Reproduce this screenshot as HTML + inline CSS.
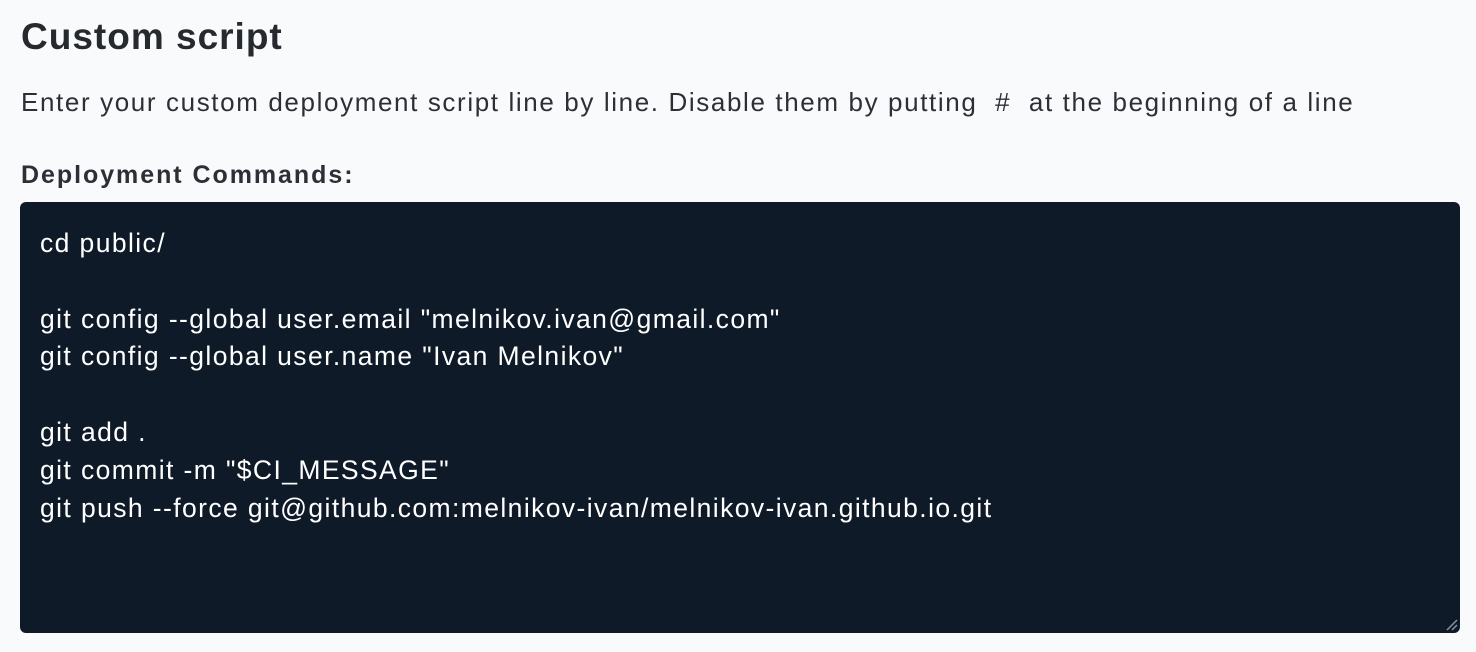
<!DOCTYPE html>
<html><head><meta charset="utf-8"><style>
html,body{margin:0;padding:0;background:#f9fafb;width:1476px;height:652px;overflow:hidden;font-family:"Liberation Sans",sans-serif;color:#26292e}
h1{position:absolute;left:21px;top:16px;margin:0;font-size:37px;font-weight:bold;color:#26292e;letter-spacing:1px}
.sub{position:absolute;left:21px;top:87px;font-size:26px;color:#2c3036;white-space:nowrap;letter-spacing:1.62px}
.lbl{position:absolute;left:21px;top:161px;font-size:25px;font-weight:bold;color:#2c3036;letter-spacing:1.95px}
.box{position:absolute;left:20px;top:202px;width:1440px;height:431px;background:#0f1a28;border-radius:6px}
pre{margin:0;position:absolute;left:20px;top:23px;font-family:"Liberation Sans",sans-serif;font-size:26.5px;line-height:37.8px;color:#fff;letter-spacing:1.4px}
.grip{position:absolute;right:2px;bottom:2px}
</style></head><body>
<h1>Custom script</h1>
<div class="sub">Enter your custom deployment script line by line. Disable them by putting &nbsp;#&nbsp; at the beginning of a line</div>
<div class="lbl">Deployment Commands:</div>
<div class="box">
<pre>cd public/

git config --global user.email "melnikov.ivan@gmail.com"
git config --global user.name "Ivan Melnikov"

git add .
git commit -m "$CI_MESSAGE"
git push --force git@github.com:melnikov-ivan/melnikov-ivan.github.io.git</pre>
<svg class="grip" width="14" height="14"><path d="M13 3L3 13M13 8L8 13" stroke="#8a9099" stroke-width="1.5"/></svg>
</div>
</body></html>
